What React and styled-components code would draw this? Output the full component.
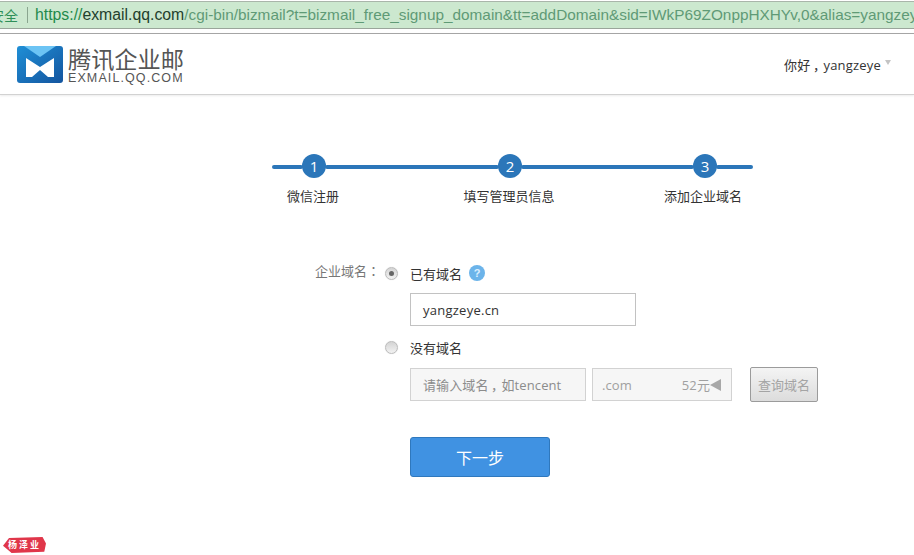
import styled, { createGlobalStyle } from "styled-components";

const GlobalStyle = createGlobalStyle`
  html, body {
    margin: 0;
    padding: 0;
    background: #fff;
    overflow: hidden;
  }
  body {
    font-family: "Open Sans", "Noto Sans CJK SC", sans-serif;
    font-size: 13px;
    color: #333;
  }
`;

const Page = styled.div`
  position: relative;
  width: 914px;
  height: 555px;
  overflow: hidden;
`;

const AddressBar = styled.div`
  height: 26px;
  margin-top: 1px;
  display: flex;
  align-items: center;
  background: #cce8cf;
  border-top: 1px solid #a9b5aa;
  border-bottom: 1px solid #9aa59b;
  white-space: nowrap;
  overflow: hidden;
  color: #3f8a5c;
`;

const Secure = styled.span`
  flex: none;
  margin-left: -10px;
  font-size: 14px;
  color: #2f8f58;
`;

const Divider = styled.span`
  flex: none;
  width: 1px;
  height: 16px;
  margin: 0 7px 0 9px;
  background: #8aa58f;
`;

const Url = styled.span`
  flex: none;
  font-family: "Liberation Sans", Arial, sans-serif;
  font-size: 15.35px;
  color: #5f9a76;
  b {
    font-size: 15.8px;
    font-weight: normal;
    color: #23402d;
  }
  i {
    font-size: 15.8px;
    font-style: normal;
    color: #1f8a4c;
  }
`;

const Header = styled.header`
  margin-top: 4px;
  height: 60px;
  display: flex;
  align-items: center;
  justify-content: space-between;
  padding: 0 23px 0 17px;
  border-top: 1px solid #a5a5a5;
  border-bottom: 1px solid #d2d2d2;
  box-shadow: 0 1px 2px rgba(0, 0, 0, 0.08);
`;

const Brand = styled.div`
  display: flex;
  align-items: center;
  gap: 5px;
`;

const BrandText = styled.div`
  display: flex;
  flex-direction: column;
  margin-top: 2px;
  color: #555;
`;

const BrandName = styled.span`
  font-size: 23.2px;
  line-height: 27px;
  white-space: nowrap;
`;

const BrandDomain = styled.span`
  font-family: "Liberation Sans", Arial, sans-serif;
  font-size: 12.5px;
  line-height: 11px;
  letter-spacing: 1.1px;
  white-space: nowrap;
`;

const User = styled.div`
  display: flex;
  align-items: flex-start;
  gap: 4px;
  font-size: 13px;
  letter-spacing: 0.2px;
  color: #333;
`;

const Caret = styled.span`
  width: 0;
  height: 0;
  margin-top: 5px;
  border-left: 3px solid transparent;
  border-right: 3px solid transparent;
  border-top: 5px solid #c4c4c4;
`;

// fullwidth punctuation in the screenshot is centred in its cell
const Punct = styled.span`
  display: inline-block;
  width: 1em;
  text-indent: ${({ $indent }) => $indent || 0}em;
  font-family: "Noto Sans CJK KR", sans-serif;
`;

const Steps = styled.section`
  margin: 59px 0 0 272px;
  width: 481px;
`;

const Track = styled.div`
  display: flex;
  align-items: center;
`;

const Segment = styled.span`
  height: 4px;
  margin-top: 2px;
  width: ${({ $width }) => $width}px;
  background: #2b76b9;
  border-radius: 2px;
`;

const StepDot = styled.span`
  width: 24px;
  height: 24px;
  flex: none;
  margin: 0 -1px;
  border-radius: 50%;
  background: #2b76b9;
  color: #fff;
  font-size: 15px;
  line-height: 24px;
  text-align: center;
  z-index: 1;
`;

const StepLabels = styled.div`
  display: flex;
  margin: 9px 0 0 -19px;
`;

const StepLabel = styled.span`
  width: 120px;
  flex: none;
  margin-left: ${({ $gap }) => $gap || 0}px;
  font-size: 13px;
  line-height: 18px;
  text-align: center;
  color: #333;
`;

const Form = styled.form`
  margin-top: 58px;
  display: grid;
  grid-template-columns: 385px 25px 1fr;
  align-items: center;
`;

const FieldName = styled.span`
  margin-bottom: 4px;
  padding-right: 5px;
  text-align: right;
  font-size: 13px;
  line-height: 16px;
  color: #777;
  white-space: nowrap;
`;

const Radio = styled.span`
  width: 13px;
  height: 13px;
  box-sizing: border-box;
  border-radius: 50%;
  border: 1px solid #bcbcbc;
  background: linear-gradient(#d4d4d4, #f2f2f2);
  box-shadow: 0 0 1px rgba(0, 0, 0, 0.15);
  display: flex;
  align-items: center;
  justify-content: center;
  &::after {
    content: "";
    width: 5px;
    height: 5px;
    border-radius: 50%;
    background: ${({ $checked }) => ($checked ? "#666" : "transparent")};
  }
`;

const OptionLabel = styled.div`
  display: flex;
  align-items: center;
  gap: 7px;
  height: 20px;
  font-size: 13px;
  color: #333;
`;

const Help = styled.span`
  width: 16px;
  height: 16px;
  border-radius: 50%;
  background: #6cb4ea;
  color: #dcefff;
  font-family: "Liberation Sans", Arial, sans-serif;
  font-size: 11px;
  font-weight: bold;
  line-height: 16px;
  text-align: center;
`;

const DomainBox = styled.div`
  grid-column: 3;
  width: 226px;
  height: 33px;
  margin: 10px 0 11px;
  box-sizing: border-box;
  border: 1px solid #c2c2c2;
  padding-left: 12px;
  font-size: 13px;
  letter-spacing: 0.25px;
  line-height: 32px;
  color: #333;
`;

const SearchRow = styled.div`
  grid-column: 3;
  display: flex;
  align-items: center;
  margin-top: 10px;
`;

const FakeInput = styled.div`
  box-sizing: border-box;
  height: 33px;
  width: ${({ $width }) => $width}px;
  display: flex;
  align-items: center;
  justify-content: space-between;
  border: 1px solid #d2d2d2;
  background: #f6f6f6;
  padding: 0 10px 0 12px;
  margin-right: 6px;
  font-size: 13px;
  letter-spacing: 0.1px;
  line-height: 18px;
  color: #8c8c8c;
  white-space: nowrap;
  overflow: hidden;
`;

const Suffix = styled.span`
  margin-left: -3px;
  color: #a0a0a0;
`;

const Price = styled.span`
  display: flex;
  align-items: center;
  color: #a0a0a0;
`;

const PriceArrow = styled.span`
  width: 0;
  height: 0;
  border-top: 6px solid transparent;
  border-bottom: 6px solid transparent;
  border-right: 11px solid #a8a8a8;
`;

const QueryButton = styled.button`
  width: 68px;
  height: 35px;
  margin-left: 12px;
  padding: 0;
  border: 1px solid #9b9b9b;
  border-radius: 2px;
  background: linear-gradient(#f4f4f4, #dcdcdc);
  color: #a4a4a4;
  font: inherit;
  font-size: 13px;
`;

const NextButton = styled.button`
  grid-column: 3;
  width: 140px;
  height: 40px;
  margin-top: 35px;
  padding: 0;
  border: 1px solid #2f78bd;
  border-radius: 3px;
  background: #4092e2;
  color: #fff;
  font: inherit;
  font-size: 16px;
`;

const Seal = styled.div`
  position: absolute;
  left: 3px;
  bottom: 2px;
  width: 43px;
  height: 16px;
  display: flex;
  align-items: center;
  justify-content: center;
  background: #e0364a;
  clip-path: polygon(0 55%, 14% 6%, 92% 0, 100% 40%, 96% 92%, 20% 100%);
  color: #fff;
  font-family: "Noto Sans CJK SC", sans-serif;
  font-size: 9px;
  font-weight: 700;
  letter-spacing: 2px;
  line-height: 16px;
`;

const Logo = () => (
  <svg width="46" height="37" viewBox="0 0 46 37" aria-hidden="true">
    <defs>
      <linearGradient id="logoBody" x1="0" y1="0" x2="1" y2="1">
        <stop offset="0" stopColor="#1f8fd6" />
        <stop offset="1" stopColor="#14559f" />
      </linearGradient>
    </defs>
    <rect width="46" height="37" rx="3" fill="url(#logoBody)" />
    <path d="M7 0H39L23 11Z" fill="#6cc4f4" />
    <path d="M9 12L23 21L37 12V31H31L23 24L15 31H9Z" fill="#fff" />
  </svg>
);

const App = () => (
  <Page>
    <GlobalStyle />
    <AddressBar>
      <Secure>安全</Secure>
      <Divider />
      <Url>
        <i>https://</i>
        <b>exmail.qq.com</b>
        /cgi-bin/bizmail?t=bizmail_free_signup_domain&amp;tt=addDomain&amp;sid=IWkP69ZOnppHXHYv,0&amp;alias=yangzeye
      </Url>
    </AddressBar>
    <Header>
      <Brand>
        <Logo />
        <BrandText>
          <BrandName>腾讯企业邮</BrandName>
          <BrandDomain>EXMAIL.QQ.COM</BrandDomain>
        </BrandText>
      </Brand>
      <User>
        <span>
          你好<Punct $indent={0.2}>，</Punct>yangzeye
        </span>
        <Caret />
      </User>
    </Header>
    <Steps>
      <Track>
        <Segment $width={31} />
        <StepDot>1</StepDot>
        <Segment $width={174} />
        <StepDot>2</StepDot>
        <Segment $width={173} />
        <StepDot>3</StepDot>
        <Segment $width={37} />
      </Track>
      <StepLabels>
        <StepLabel>微信注册</StepLabel>
        <StepLabel $gap={76}>填写管理员信息</StepLabel>
        <StepLabel $gap={74}>添加企业域名</StepLabel>
      </StepLabels>
    </Steps>
    <Form>
      <FieldName>
        企业域名<Punct>：</Punct>
      </FieldName>
      <Radio $checked />
      <OptionLabel>
        已有域名
        <Help>?</Help>
      </OptionLabel>
      <DomainBox>yangzeye.cn</DomainBox>
      <span />
      <Radio />
      <OptionLabel>没有域名</OptionLabel>
      <SearchRow>
        <FakeInput $width={176}>
          <span>
            请输入域名<Punct $indent={0.2}>，</Punct>如tencent
          </span>
        </FakeInput>
        <FakeInput $width={140}>
          <Suffix>.com</Suffix>
          <Price>
            52元
            <PriceArrow />
          </Price>
        </FakeInput>
        <QueryButton type="button">查询域名</QueryButton>
      </SearchRow>
      <NextButton type="button">下一步</NextButton>
    </Form>
    <Seal>杨泽业</Seal>
  </Page>
);

export default App;
